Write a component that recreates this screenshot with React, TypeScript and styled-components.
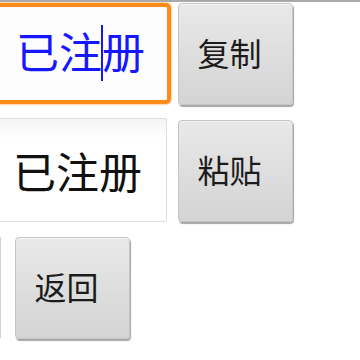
import styled, { createGlobalStyle, css } from 'styled-components';

const Global = createGlobalStyle`
  html, body {
    margin: 0;
    padding: 0;
    background: #ffffff;
    overflow: hidden;
  }
  body {
    width: 360px;
    height: 360px;
    font-family: "Noto Sans CJK SC", "Noto Sans", sans-serif;
  }
`;

const Screen = styled.div`
  width: 360px;
  height: 360px;
  overflow: hidden;
  border-top: 2px solid #a9a9a9;
  box-sizing: border-box;
`;

const Rows = styled.div`
  display: flex;
  flex-direction: column;
  gap: 15px;
  padding-top: 1px;
  margin-left: -12px;
`;

const Row = styled.div`
  display: flex;
  align-items: flex-start;
  height: 102px;
`;

const EditBox = styled.div<{ $focused?: boolean }>`
  box-sizing: border-box;
  display: flex;
  align-items: center;
  font-size: 43px;
  line-height: 1;
  ${(p) =>
    p.$focused
      ? css`
          width: 183px;
          height: 101px;
          margin-right: 7px;
          padding-left: 24px;
          padding-bottom: 6px;
          border: 4px solid #ff8c1a;
          border-radius: 5px;
          background: #fdfdfd;
          color: #1717ff;
          box-shadow: 0 0 1px 1px rgba(255, 170, 80, 0.5);
        `
      : css`
          width: 179px;
          height: 104px;
          margin-top: -2px;
          margin-right: 11px;
          padding-left: 24px;
          border: 1px solid #dedede;
          border-radius: 2px;
          background: linear-gradient(#f4f4f4, #ffffff 20%);
          color: #111111;
        `}
`;

const Caret = styled.span`
  display: inline-block;
  width: 2px;
  height: 56px;
  margin: 0 -1px;
  background: #1717ff;
  position: relative;
  top: 2px;
`;

const Stub = styled.div`
  box-sizing: border-box;
  width: 13px;
  height: 101px;
  margin-right: 14px;
  border-right: 2px solid #d2d2d2;
  background: #f6f6f6;
`;

const Button = styled.div`
  box-sizing: border-box;
  width: 115px;
  height: 102px;
  display: flex;
  align-items: center;
  justify-content: center;
  padding-right: 12px;
  padding-bottom: 4px;
  font-size: 32px;
  color: #1c1c1c;
  border-radius: 4px;
  border: 1px solid #c4c4c4;
  background: linear-gradient(#e9e9e9, #dcdcdc 60%, #d4d4d4);
  box-shadow: 1px 2px 1px #a6a6a6, inset 0 1px 0 #f4f4f4;
`;

export default function App() {
  return (
    <Screen>
      <Global />
      <Rows>
        <Row>
          <EditBox $focused>
            已注<Caret />册
          </EditBox>
          <Button>复制</Button>
        </Row>
        <Row>
          <EditBox>已注册</EditBox>
          <Button>粘贴</Button>
        </Row>
        <Row>
          <Stub />
          <Button>返回</Button>
        </Row>
      </Rows>
    </Screen>
  );
}
